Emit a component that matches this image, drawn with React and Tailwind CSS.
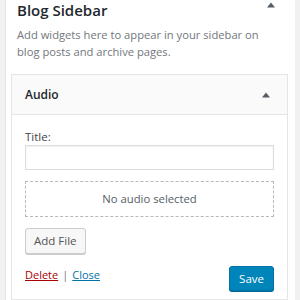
import React from 'react';

const Caret = () => (
  <svg width="10" height="6" viewBox="0 0 10 6" className="fill-[#555d66]">
    <path d="M5 0.5L9 5.5H1Z" />
  </svg>
);

const App = () => {
  return (
    <div className="w-[300px] h-[300px] overflow-hidden bg-[#f1f1f1] font-['Open_Sans',sans-serif] flex">
      {/* sidebar panel */}
      <div className="ml-[5px] w-[290px] bg-white border-l border-[#e5e5e5] flex flex-col">
        <div className="flex items-start justify-between pl-[11px] pr-[19px]">
          <h2 className="text-[15px] font-semibold text-[#23282d] leading-[20px]">Blog Sidebar</h2>
          <span className="mt-[2px]"><Caret /></span>
        </div>
        <p className="pl-[11px] pr-[25px] mt-[6px] text-[11.2px] leading-[17px] text-[#72777c]">
          Add widgets here to appear in your sidebar on blog posts and archive pages.
        </p>

        {/* widget */}
        <div className="mt-[14px] ml-[5px] w-[277px] border border-[#e5e5e5] bg-white flex-1">
          <div className="h-[40px] bg-[#fafafa] border-b border-[#e5e5e5] flex items-center justify-between pl-[13px] pr-[16px]">
            <span className="text-[12px] font-semibold text-[#23282d]">Audio</span>
            <Caret />
          </div>
          <div className="px-[13px] pt-[14px]">
            <label className="block text-[11.5px] text-[#444] leading-[16px]">Title:</label>
            <div className="h-[25px] border border-[#ddd] shadow-[inset_0_1px_2px_rgba(0,0,0,0.07)]" />
            <div className="mt-[11px] h-[36px] border border-dashed border-[#b4b9be] flex items-center justify-center text-[11.3px] text-[#555d66]">
              No audio selected
            </div>
            <button className="mt-[11px] h-[26px] px-[8px] bg-[#f7f7f7] border border-[#ccc] rounded-[3px] shadow-[0_1px_0_#ccc] text-[11.5px] text-[#555]">
              Add File
            </button>
            <div className="mt-[12px] flex items-start justify-between">
              <div className="text-[11px] leading-[16px] mt-[1px]">
                <a className="text-[#a00] underline">Delete</a>
                <span className="text-[#72777c] mx-[4px]">|</span>
                <a className="text-[#0073aa] underline">Close</a>
              </div>
              <button className="h-[25px] px-[9px] bg-[#0085ba] border border-[#0073aa] rounded-[3px] shadow-[0_1px_0_#006799] text-[11.5px] text-white">
                Save
              </button>
            </div>
          </div>
        </div>
      </div>
    </div>
  );
};

export default App;
